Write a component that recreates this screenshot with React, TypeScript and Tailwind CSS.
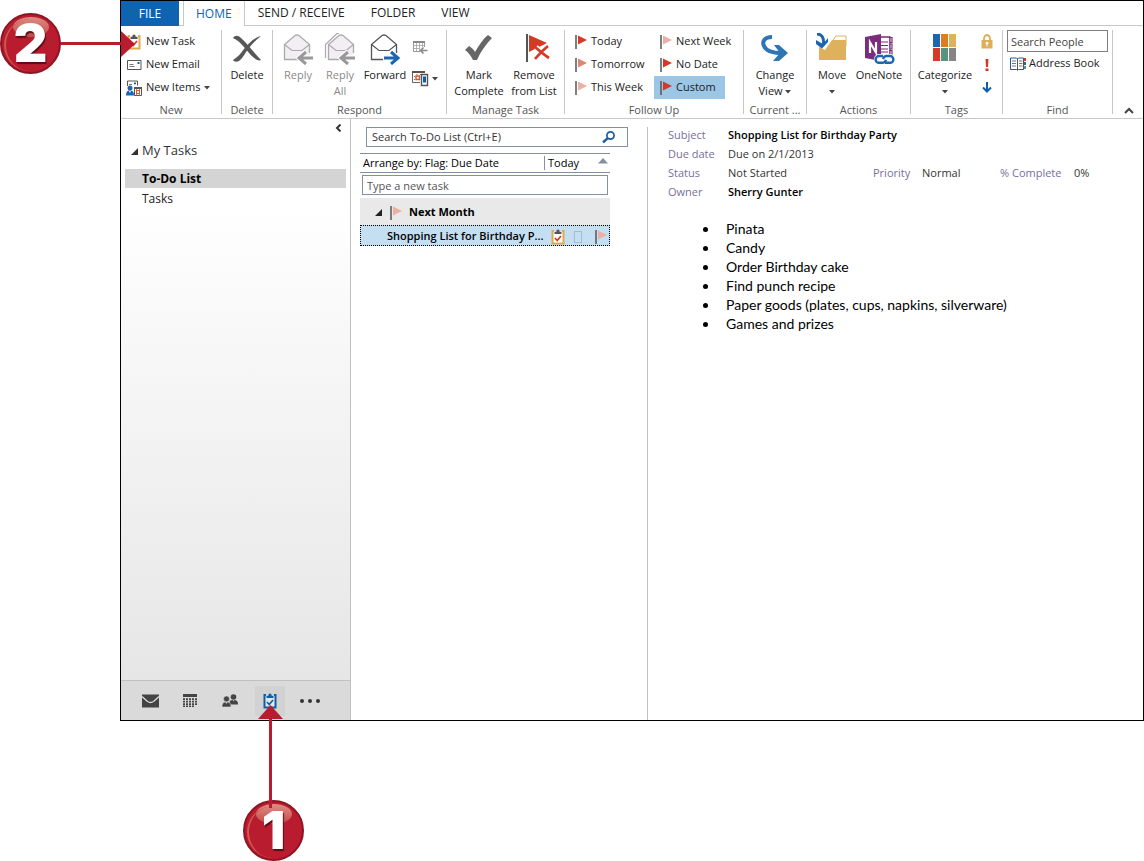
import { useState } from 'react';
import type { ReactNode } from 'react';
import clsx from 'clsx';

const RED = '#d43a26';

function Flag({ color, size = 14 }: { color: string; size?: number }) {
  return (
    <svg width="12" height={size} viewBox="0 0 12 14" className="shrink-0">
      <path d="M1 0v14" stroke="#555" strokeWidth="1.5" />
      <path d="M3 0.5L12 5L3 9.5z" fill={color} />
    </svg>
  );
}

function Caret() {
  return (
    <svg width="6" height="4" viewBox="0 0 6 4" className="inline-block shrink-0">
      <path d="M0 0h6L3 3.5z" fill="#444" />
    </svg>
  );
}

function Clipboard({ frame = '#dfa94c', clip = '#555', tick = RED, paper = '#fff' }) {
  return (
    <svg width="14" height="16" viewBox="0 0 14 16" className="shrink-0">
      <path d="M2 2h10v12.500H2z" fill={paper} />
      <path d="M3 1H0.500v14.500h13V1H11v2h0.500v10.500h-9V3H3z" fill={frame} />
      <path d="M3.500 5V2.800h1.800a1.700 2.300 0 0 1 3.400 0h1.800V5z" fill={clip} />
      <path d="M4 9l2.200 2.500L10 7" fill="none" stroke={tick} strokeWidth="1.7" />
    </svg>
  );
}

function MailIcon() {
  return (
    <svg width="15" height="12" viewBox="0 0 15 12">
      <path d="M0.5 1.5h13.5v9H0.5z" fill="#fff" stroke="#555" />
      <path d="M2.5 5.5h4M2.5 7.5h5" stroke="#777" />
      <path d="M10.5 3h2v2h-2z" fill="#0f5fa8" />
    </svg>
  );
}

function NewItemsIcon() {
  return (
    <svg width="16" height="16" viewBox="0 0 16 16">
      <path d="M1.5 6V1h10v4.5" fill="#fff" stroke="#555" />
      <path d="M3 4.5h3" stroke="#777" />
      <path d="M8 2.5h2v1.7H8z" fill="#0f5fa8" />
      <circle cx="4" cy="8" r="2.5" fill="#1c66b0" />
      <path d="M0 15.5c0-4 1.5-5 4-5s4 1 4 5z" fill="#1c66b0" />
      <path d="M3 11l1 2 1-2z" fill="#fff" />
      <path d="M8.5 7.5h7v8h-7z" fill="#fff" stroke="#555" />
      <path d="M8 7h8v2H8z" fill="#555" />
      <path d="M10.500 10.500h3v3h-3z" fill="none" stroke="#d9572b" />
      <path d="M10.500 9v6.500M13.500 9v6.500" stroke="#d9572b" strokeWidth="0.8" />
    </svg>
  );
}

function DeleteIcon() {
  return (
    <svg width="32" height="32" viewBox="0 0 32 32">
      <path d="M2 5c2-3 5-3 8 0 7 6 12 14 20 22-2 1-5 0-8-3C15 18 11 9 2 5z" fill="#585858" />
      <path d="M30 3c-8 2-13 8-17 13-3 4-6 8-11 11 1 2 4 2 6 1 4-3 6-8 9-12C21 11 25 7 30 3z" fill="#585858" />
    </svg>
  );
}

type EnvelopeProps = { stroke: string; fill: string; arrow: string; forward?: boolean; double?: boolean };

function Envelope({ stroke, fill, arrow, forward, double }: EnvelopeProps) {
  return (
    <svg width="32" height="32" viewBox="0 0 32 32">
      {double && <path d="M1.5 25V11.5L13 0.500h2" fill="none" stroke={stroke} strokeWidth="1.2" />}
      <g transform={double ? 'translate(2 0)' : undefined}>
        <path d="M2.5 11.5L13 2.5q2-1 4 0L27.5 11.5V26.5H2.5z" fill={fill} />
        <path d="M16 26.5H2.5V11.5L13 2.5q2-1 4 0L27.5 11.5V20" fill="none" stroke={stroke} strokeWidth="1.3" />
        <path d="M2.5 11.5L10 17.500h10L27.5 11.500" fill="none" stroke={stroke} strokeWidth="1.2" />
      </g>
      {forward ? (
        <g fill="none">
          <path d="M14 25h14M21 18.500l7 6.500-7 6.500" stroke="#fff" strokeWidth="5" />
          <path d="M15 25h14M22 19l7 6-7 6" stroke={arrow} strokeWidth="3" />
        </g>
      ) : (
        <g fill="none">
          <path d="M17 25h14M24 18.500L17 25l7 6.500" stroke="#fff" strokeWidth="5" />
          <path d="M17 25h14M24 19l-7 6 7 6" stroke={arrow} strokeWidth="3" />
        </g>
      )}
    </svg>
  );
}

function MeetingIcon() {
  return (
    <svg width="16" height="16" viewBox="0 0 16 16">
      <path d="M1 1h12v2H1z" fill="#888" />
      <path d="M1.500 3v8.500H8M12.500 3v4" fill="none" stroke="#999" />
      <path d="M4.500 3v8M7.500 3v8M10.500 3v4M2 5.500h10M2 8.500h6" stroke="#aaa" strokeWidth="0.900" />
      <path d="M15.500 10.500H9M11.500 7.500l-3 3 3 3" fill="none" stroke="#888" strokeWidth="1.600" />
    </svg>
  );
}

function MoreRespondIcon() {
  return (
    <svg width="17" height="17" viewBox="0 0 17 17">
      <path d="M0 1h13v2H0z" fill="#555" />
      <path d="M0.500 3v9.500H8" fill="none" stroke="#666" />
      <path d="M2 6.500h1M2 9.500h1M4.500 4.500h1M8 4.500h1" stroke="#777" />
      <path d="M4 6h3.500v3.500H4z" fill="#fff" stroke="#d9572b" strokeWidth="1.400" />
      <path d="M9.500 4.500h6v11h-6z" fill="#fff" stroke="#555" strokeWidth="1.400" />
      <path d="M11 6.500h3v6h-3z" fill="#0f5fa8" />
    </svg>
  );
}

function CheckIcon() {
  return (
    <svg width="32" height="32" viewBox="0 0 32 32">
      <path d="M2 17l4-4c3 2 5 4 6 6C16 12 20 6 25 2l4 3c-6 6-11 13-15 22h-4c-2-4-5-8-8-10z" fill="#666" />
    </svg>
  );
}

function RemoveIcon() {
  return (
    <svg width="32" height="32" viewBox="0 0 32 32">
      <path d="M9 1v28" stroke="#555" strokeWidth="2" />
      <path d="M11 2l18 8-18 9z" fill={RED} />
      <path d="M18 14l12 11M29 14L17 26" stroke="#fff" strokeWidth="5" />
      <path d="M17 14c5 4 8 7 14 11M30 13c-5 4-9 8-13 13" stroke={RED} strokeWidth="2.800" fill="none" />
    </svg>
  );
}

function ChangeViewIcon() {
  return (
    <svg width="32" height="32" viewBox="0 0 32 32">
      <path d="M13 4C5 4 3 9 5 13c2 5 8 7 18 7" fill="none" stroke="#2e75b6" strokeWidth="4" />
      <path d="M15 12h5l9 8-9 8h-6l7-8z" fill="#2e75b6" />
    </svg>
  );
}

function MoveIcon() {
  return (
    <svg width="32" height="32" viewBox="0 0 32 32">
      <path d="M17 7l3-4h10v10H17z" fill="#fff" stroke="#deb25c" />
      <path d="M3 7h27v20H3z" fill="#deb25c" />
      <path d="M0 0h8l8 7-7 10-9-5z" fill="#fff" />
      <path d="M1 1c5 0 7 4 6.500 10" fill="none" stroke="#1c66b0" strokeWidth="3" />
      <path d="M0 7l7 4 5-6v4L6 15.500 0 11z" fill="#1c66b0" />
    </svg>
  );
}

function OneNoteIcon() {
  return (
    <svg width="32" height="32" viewBox="0 0 32 32">
      <path d="M17 4h10v22H17z" fill="#fff" stroke="#7b2d7b" strokeWidth="1.300" />
      <path d="M27 4.500h2v5h-2zM27 11h2v5h-2zM27 17.500h2v5h-2z" fill="#fff" stroke="#7b2d7b" strokeWidth="1.200" />
      <path d="M18 9h7M18 12.500h7M18 16h7M18 19h7" stroke="#7b2d7b" strokeWidth="1.200" />
      <path d="M2 4l16-3v27L2 25z" fill="#7b2d7b" />
      <path d="M7 20V9.500l6 10V9" fill="none" stroke="#fff" strokeWidth="2.200" />
      <rect x="11" y="21" width="21" height="11" rx="5" fill="#fff" />
      <path d="M20 23h-4a3.400 3.400 0 0 0 0 6.800h3.500q2.500 0 3.500-3" fill="none" stroke="#1c66b0" strokeWidth="2.400" />
      <path d="M22 29.800h5a3.400 3.400 0 0 0 0-6.800h-3.500q-2.500 0-3.500 3" fill="none" stroke="#1c66b0" strokeWidth="2.400" />
    </svg>
  );
}

function CategorizeIcon() {
  return (
    <svg width="24" height="32" viewBox="0 0 24 32">
      <path d="M0 1h7v13H0z" fill="#1c66b0" />
      <path d="M8 1h7v13H8z" fill="#e07b1f" />
      <path d="M16 1h7v13h-7z" fill="#deb25c" />
      <path d="M0 15h7v13H0z" fill={RED} />
      <path d="M8 15h7v13H8z" fill="#55947e" />
      <path d="M16 15h7v13h-7z" fill="#858585" />
    </svg>
  );
}

function LockIcon() {
  return (
    <svg width="12" height="15" viewBox="0 0 12 15">
      <path d="M3 7V4.500a3 3.500 0 0 1 6 0V7" fill="none" stroke="#deaf58" strokeWidth="1.800" />
      <path d="M0.500 6h11v8.500h-11z" fill="#deaf58" />
      <circle cx="6" cy="9.200" r="1.400" fill="#fff" />
      <path d="M5.500 9.500h1v3h-1z" fill="#fff" />
    </svg>
  );
}

function AddressBookIcon() {
  return (
    <svg width="16" height="14" viewBox="0 0 16 14">
      <path d="M7.500 2L6.500 1H0.500v11.500h6l1 1 1-1h5V1h-5z" fill="#fff" stroke="#1c5f9e" />
      <path d="M7.500 2v11M13.500 1v11.500" stroke="#555" />
      <path d="M2 4h4M2 6.500h4M2 9h4M9 4h3.500M9 6.500h3.500M9 9h3.500" stroke="#777" />
      <path d="M14 1h2v3h-2z" fill={RED} />
      <path d="M14 5h2v3h-2z" fill="#1c66b0" />
      <path d="M14 9h2v3h-2z" fill="#55947e" />
    </svg>
  );
}

function Separator() {
  return <div className="my-1 w-px shrink-0 bg-[#c8c8c8]" />;
}

type GroupProps = { label: string; className: string; inset?: boolean; children: ReactNode };

function Group({ label, className, inset, children }: GroupProps) {
  return (
    <>
      <section className={clsx('shrink-0 pt-1', className)}>
        <div className={clsx('flex h-[69px]', inset && 'pl-1')}>{children}</div>
        <h2 className="mt-[3px] text-center leading-4 text-[#555]">{label}</h2>
      </section>
      <Separator />
    </>
  );
}

type BigButtonProps = { icon: ReactNode; width: string; muted?: boolean; children: ReactNode };

function BigButton({ icon, width, muted, children }: BigButtonProps) {
  return (
    <button className={clsx('flex flex-col items-center gap-0.5 pt-[3px] leading-4 whitespace-nowrap', width, muted && 'text-[#8a8a8a]')}>
      {icon}
      <span className="text-center">{children}</span>
    </button>
  );
}

const tabs = ['HOME', 'SEND / RECEIVE', 'FOLDER', 'VIEW'];

const followUps = [
  [
    { label: 'Today', color: RED },
    { label: 'Tomorrow', color: '#e08472' },
    { label: 'This Week', color: '#eab0a3' },
  ],
  [
    { label: 'Next Week', color: '#eab0a3' },
    { label: 'No Date', color: RED },
    { label: 'Custom', color: RED },
  ],
];

const shoppingList = [
  'Pinata',
  'Candy',
  'Order Birthday cake',
  'Find punch recipe',
  'Paper goods (plates, cups, napkins, silverware)',
  'Games and prizes',
];

function Tabs({ active, onSelect }: { active: string; onSelect: (tab: string) => void }) {
  return (
    <nav className="flex h-[25px] text-[12px]">
      <button className="w-[58px] bg-[#0f63b0] text-white">FILE</button>
      <div className="w-1 border-b border-[#c8c8c8]" />
      {tabs.map(tab => (
        <button
          key={tab}
          onClick={() => onSelect(tab)}
          className={clsx(
            'border-[#c8c8c8]',
            tab === active ? 'border-x px-3 text-[#0f63b0]' : 'border-b px-[13px]',
          )}
        >
          {tab}
        </button>
      ))}
      <div className="flex-1 border-b border-[#c8c8c8]" />
    </nav>
  );
}

function Ribbon() {
  const [followUp, setFollowUp] = useState('Custom');

  return (
    <div className="flex h-[93px] border-b border-[#c8c8c8]">
      <Group label="New" className="w-[100px]">
        <div className="flex flex-col pl-[5px]">
          <button className="flex h-[23px] items-center gap-1">
            <span className="flex w-4 justify-center"><Clipboard /></span>New Task
          </button>
          <button className="flex h-[23px] items-center gap-1">
            <span className="flex w-4 justify-center"><MailIcon /></span>New Email
          </button>
          <button className="flex h-[23px] items-center gap-1">
            <NewItemsIcon />New Items<Caret />
          </button>
        </div>
      </Group>

      <Group label="Delete" className="w-[50px]">
        <BigButton width="w-full" icon={<DeleteIcon />}>Delete</BigButton>
      </Group>

      <Group label="Respond" className="w-[173px]" inset>
        <BigButton width="w-[42px]" muted icon={<Envelope stroke="#aaa" fill="#f2eef3" arrow="#999" />}>Reply</BigButton>
        <BigButton width="w-[42px]" muted icon={<Envelope stroke="#aaa" fill="#f2eef3" arrow="#999" double />}>
          Reply<br />All
        </BigButton>
        <BigButton width="w-[48px]" icon={<Envelope stroke="#555" fill="#fff" arrow="#1c66b0" forward />}>Forward</BigButton>
        <div className="flex flex-col gap-3.5 pt-2.5 pl-[3px]">
          <button aria-label="Meeting"><MeetingIcon /></button>
          <button aria-label="More" className="flex items-center gap-[3px]"><MoreRespondIcon /><Caret /></button>
        </div>
      </Group>

      <Group label="Manage Task" className="w-[117px]">
        <BigButton width="w-[64px]" icon={<CheckIcon />}>Mark<br />Complete</BigButton>
        <BigButton width="w-[46px]" icon={<RemoveIcon />}>Remove<br />from List</BigButton>
      </Group>

      <Group label="Follow Up" className="w-[178px]" inset>
        {followUps.map((column, i) => (
          <div key={i} className={clsx('flex flex-col', i === 0 ? 'w-[85px]' : 'w-[71px]')}>
            {column.map(item => (
              <button
                key={item.label}
                onClick={() => setFollowUp(item.label)}
                className={clsx(
                  'flex h-[23px] items-center gap-1 pl-1.5 whitespace-nowrap',
                  item.label === followUp && 'bg-[#9cc6e6]',
                )}
              >
                <Flag color={item.color} />
                {item.label}
              </button>
            ))}
          </div>
        ))}
      </Group>

      <Group label="Current ..." className="w-[62px]">
        <BigButton width="w-full" icon={<ChangeViewIcon />}>
          Change<br />View <Caret />
        </BigButton>
      </Group>

      <Group label="Actions" className="w-[103px]" inset>
        <BigButton width="w-[42px]" icon={<MoveIcon />}>Move<br /><Caret /></BigButton>
        <BigButton width="w-[52px]" icon={<OneNoteIcon />}>OneNote</BigButton>
      </Group>

      <Group label="Tags" className="w-[91px]" inset>
        <BigButton width="w-[60px]" icon={<CategorizeIcon />}>Categorize<br /><Caret /></BigButton>
        <div className="flex w-6 flex-col items-center">
          <button aria-label="Private" className="flex h-[23px] items-center"><LockIcon /></button>
          <button aria-label="High importance" className="flex h-[23px] items-center">
            <svg width="4" height="12" viewBox="0 0 4 12">
              <path d="M0.500 0h3L3 8H1zM0.500 9.500h3V12h-3z" fill={RED} />
            </svg>
          </button>
          <button aria-label="Low importance" className="flex h-[23px] items-center">
            <svg width="10" height="12" viewBox="0 0 10 12">
              <path d="M5 0v9M1 5.500l4 4 4-4" fill="none" stroke="#0f5fa8" strokeWidth="2" />
            </svg>
          </button>
        </div>
      </Group>

      <Group label="Find" className="w-[109px]">
        <div className="flex w-full flex-col px-1">
          <input
            aria-label="Search People"
            placeholder="Search People"
            className="h-[22px] w-full border border-[#808080] px-[3px] placeholder:text-[#444]"
          />
          <button className="flex h-[23px] items-center gap-[3px] pl-[3px] whitespace-nowrap">
            <AddressBookIcon />Address Book
          </button>
        </div>
      </Group>

      <button aria-label="Collapse the ribbon" className="flex flex-1 items-end justify-center pb-1 pl-0.5">
        <svg width="10" height="7" viewBox="0 0 10 7">
          <path d="M1 6l4-4 4 4" fill="none" stroke="#444" strokeWidth="2" />
        </svg>
      </button>
    </div>
  );
}

function FolderPane() {
  return (
    <aside className="flex w-[230px] shrink-0 flex-col border-r border-[#c0c0c0]">
      <div className="flex-1 bg-linear-to-b from-white from-15% to-[#e6e6e6] px-1">
        <div className="flex h-[22px] items-center justify-end pr-1 pb-1">
          <button aria-label="Minimize the folder pane">
            <svg width="7" height="8" viewBox="0 0 7 8">
              <path d="M5.500 0.500L2 4l3.500 3.500" fill="none" stroke="#333" strokeWidth="2" />
            </svg>
          </button>
        </div>
        <button className="mb-2 flex h-5 items-center gap-1 pl-1.5 text-[13px] text-[#333]">
          <svg width="7" height="7" viewBox="0 0 7 7"><path d="M7 0v7H0z" fill="#333" /></svg>
          My Tasks
        </button>
        <button className="block h-[19px] w-full bg-[#d4d4d4] pl-[17px] text-left text-[12px] font-bold text-black">To-Do List</button>
        <button className="block h-[22px] w-full pl-[17px] text-left text-[12px]">Tasks</button>
      </div>
      <nav className="flex h-10 items-center border-t border-[#c0c0c0] bg-[#dadada] pl-[14px]">
        <button aria-label="Mail" className="flex h-7 w-[30px] items-center justify-center">
          <svg width="17" height="14" viewBox="0 0 17 14">
            <path d="M0 0.500h17v13H0z" fill="#444" />
            <path d="M0 2.500l5.500 5q3 2 6 0l5.500-5" fill="none" stroke="#dadada" strokeWidth="1.300" />
          </svg>
        </button>
        <button aria-label="Calendar" className="ml-2.5 flex h-7 w-[30px] items-center justify-center">
          <svg width="14" height="13" viewBox="0 0 14 13">
            <path d="M0 0h14v3H0z" fill="#444" />
            <path d="M0 5.200h14M0 7.700h14M0 10.200h14M0 12.300h11" stroke="#444" strokeWidth="1.700" strokeDasharray="2 1" />
          </svg>
        </button>
        <button aria-label="People" className="ml-2.5 flex h-7 w-[30px] items-center justify-center">
          <svg width="16" height="13" viewBox="0 0 16 13">
            <g fill="#444">
              <circle cx="11.500" cy="3" r="2.800" />
              <path d="M7.500 10.500c0-4 1-4.500 4-4.500s4.500 1 4.500 4.500z" />
              <g stroke="#dadada" strokeWidth="0.600">
                <circle cx="4.500" cy="5" r="3" />
                <path d="M0 13c0-4 1.500-5 4.500-5s4.500 1 4.500 5z" />
              </g>
            </g>
            <path d="M3.500 8l1 2 1-2zM10.800 6l0.700 1.500 0.700-1.500z" fill="#dadada" />
          </svg>
        </button>
        <button aria-label="Tasks" className="ml-2.5 flex h-[30px] w-[30px] items-center justify-center bg-[#d2d2d2]">
          <Clipboard frame="#0f5fa8" clip="#0f5fa8" tick="#0f5fa8" paper="#e6e6e6" />
        </button>
        <button aria-label="More options" className="ml-2.5 flex h-7 w-[30px] items-center justify-center">
          <svg width="20" height="4" viewBox="0 0 20 4" fill="#333">
            <circle cx="2" cy="2" r="2" /><circle cx="10" cy="2" r="2" /><circle cx="18" cy="2" r="2" />
          </svg>
        </button>
      </nav>
    </aside>
  );
}

function TaskPane() {
  return (
    <section className="w-[296px] shrink-0 pt-2 pr-[37px] pl-[9px]">
      <div className="-mr-[18px] ml-1.5 flex h-5 items-center border border-[#8290a0]">
        <input
          aria-label="Search To-Do List"
          placeholder="Search To-Do List (Ctrl+E)"
          className="min-w-0 flex-1 px-[5px] placeholder:text-[#333]"
        />
        <button aria-label="Search" className="pr-3">
          <svg width="13" height="12" viewBox="0 0 13 12" fill="none" stroke="#1c5f9e">
            <circle cx="8.500" cy="4.500" r="3.600" strokeWidth="1.700" />
            <path d="M5.800 7.200L1 11.500" strokeWidth="2.400" />
          </svg>
        </button>
      </div>
      <div className="mt-1.5 flex h-5 items-center border-y border-[#8290a0] text-black">
        <button className="flex-1 pl-[3px] text-left">Arrange by: Flag: Due Date</button>
        <button className="flex h-[14px] w-[66px] items-center justify-between border-l border-[#8290a0] pr-0.5 pl-[3px]">
          Today
          <svg width="10" height="10" viewBox="0 0 10 10"><path d="M5 0l5 5.500H0z" fill="#8290a0" /></svg>
        </button>
      </div>
      <input
        aria-label="Type a new task"
        placeholder="Type a new task"
        className="mx-0.5 mt-0.5 block h-5 w-[246px] border border-[#8290a0] px-1 placeholder:text-[#555]"
      />
      <div className="mt-[3px] flex h-[27px] items-center bg-[#e9e9e9] pt-0.5 pl-[15px] font-bold text-black">
        <svg width="7" height="7" viewBox="0 0 7 7"><path d="M7 0v7H0z" fill="#222" /></svg>
        <span className="mr-[7px] ml-2"><Flag color="#eab0a3" /></span>
        Next Month
      </div>
      <div className="flex h-[21px] items-center border border-dotted border-black bg-[#c3dff1] pt-0.5 pl-[26px] text-black">
        <span className="flex-1 font-semibold whitespace-nowrap">Shopping List for Birthday P...</span>
        <Clipboard />
        <span className="mr-[13px] ml-[9px] h-3 w-2 border border-[#a9bccb]" />
        <Flag color="#eab0a3" />
        <span className="w-0.5" />
      </div>
    </section>
  );
}

function ReadingPane() {
  return (
    <article className="mt-2 min-w-0 flex-1 border-l border-[#c0c0c0] pl-5">
      <dl className="-mt-0.5 grid grid-cols-[60px_145px_49px_78px_74px_1fr] leading-[19px] whitespace-nowrap text-[#333] [&>dt]:text-[#77709a]">
        <dt>Subject</dt>
        <dd className="col-span-5 font-semibold text-black">Shopping List for Birthday Party</dd>
        <dt>Due date</dt>
        <dd className="col-span-5">Due on 2/1/2013</dd>
        <dt>Status</dt>
        <dd>Not Started</dd>
        <dt>Priority</dt>
        <dd>Normal</dd>
        <dt>% Complete</dt>
        <dd>0%</dd>
        <dt>Owner</dt>
        <dd className="col-span-5 font-semibold text-black">Sherry Gunter</dd>
      </dl>
      <ul className="mt-[18px] list-disc pl-[51px] font-['Lato',sans-serif] text-[14px] leading-[19px] text-black">
        {shoppingList.map(item => <li key={item} className="pl-[7px]">{item}</li>)}
      </ul>
    </article>
  );
}

function Badge({ number }: { number: number }) {
  return (
    <div className="relative flex size-[61px] shrink-0 items-center justify-center overflow-hidden rounded-full border-2 border-[#8f1525] bg-[#b91c2e]">
      <div className="absolute top-0.5 h-5 w-9 rounded-[50%] bg-linear-to-b from-[#dc8d84] to-[#c44747]" />
      <div className="absolute top-1 left-0.5 size-[52px] rounded-full border-l-2 border-[#d0564f]" />
      <span className="relative font-['Inter',sans-serif] text-[52px] leading-none font-black text-white [text-shadow:1px_2px_1px_#5b0d18]">
        {number}
      </span>
    </div>
  );
}

export default function App() {
  const [tab, setTab] = useState('HOME');

  return (
    <div className="relative min-h-screen bg-white pl-[120px] font-['Open_Sans','Noto_Sans',sans-serif] text-[11px] text-[#222]">
      <main className="border border-black bg-white">
        <Tabs active={tab} onSelect={setTab} />
        <Ribbon />
        <div className="flex min-h-[601px]">
          <FolderPane />
          <TaskPane />
          <ReadingPane />
        </div>
      </main>

      {/* step callouts */}
      <div className="absolute top-[13px] left-0 flex items-center">
        <Badge number={2} />
        <div className="h-[3px] w-[60px] bg-[#b91c2e]" />
        <svg width="14" height="26" viewBox="0 0 14 26"><path d="M0 0l14 13L0 26z" fill="#b91c2e" /></svg>
      </div>
      <div className="absolute top-[705px] left-[243px] flex flex-col items-center">
        <div className="relative z-10 -mb-2 flex flex-col items-center pr-1.5">
          <svg width="25" height="14" viewBox="0 0 25 14"><path d="M12.500 0L25 14H0z" fill="#b91c2e" /></svg>
          <div className="h-[89px] w-[3px] bg-[#b91c2e]" />
        </div>
        <Badge number={1} />
      </div>
    </div>
  );
}
